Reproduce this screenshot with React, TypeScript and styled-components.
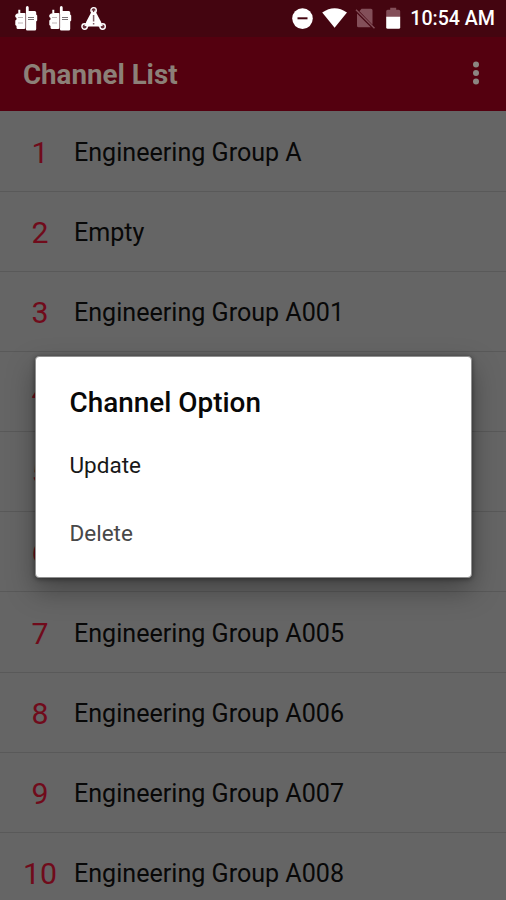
import React from "react";
import styled, { createGlobalStyle } from "styled-components";

const GlobalStyle = createGlobalStyle`
  * { box-sizing: border-box; }
  body { margin: 0; background: #656565; font-family: Roboto, sans-serif; }
`;

const Screen = styled.div`
  position: relative;
  width: 506px;
  height: 900px;
  overflow: hidden;
  background: #656565;
`;

const StatusBar = styled.header`
  display: flex;
  align-items: center;
  justify-content: space-between;
  height: 37px;
  padding: 0 11px 0 15px;
  background: #440510;
`;

const IconGroup = styled.div<{ $gap: number }>`
  display: flex;
  align-items: center;
  gap: ${(p) => p.$gap}px;
  height: 36px;
`;

const Clock = styled.span`
  color: #fff;
  font-size: 19.6px;
  font-weight: 500;
  line-height: 36px;
  white-space: nowrap;
`;

const AppBar = styled.div`
  display: flex;
  align-items: center;
  justify-content: space-between;
  height: 74px;
  padding: 0 24px 0 23px;
  background: #54000f;
`;

const AppTitle = styled.h1`
  margin: 0;
  color: #8c8078;
  font-size: 27.7px;
  font-weight: 700;
  line-height: 74px;
  padding-top: 1px;
`;

const ChannelList = styled.ol`
  margin: 0;
  padding: 0.6px 0 0;
  list-style: none;
`;

const ChannelRow = styled.li`
  display: flex;
  align-items: center;
  height: 80.15px;
  padding-top: 3px;
  border-bottom: 1px solid #595959;
`;

const ChannelNumber = styled.span`
  width: 80px;
  margin-right: -6px;
  color: #700b1b;
  font-size: 30.3px;
  line-height: 36px;
  text-align: center;
`;

const ChannelName = styled.span`
  color: #080808;
  font-size: 25.1px;
  line-height: 30px;
  white-space: nowrap;
`;

const Dialog = styled.section`
  position: absolute;
  top: 356px;
  left: 35px;
  width: 437px;
  height: 222px;
  padding: 27px 34px 0 33.5px;
  border-radius: 4px;
  background: #fff;
  border: 1px solid #909090;
  box-shadow: 0 12px 28px rgba(0, 0, 0, 0.34), 0 1px 5px rgba(0, 0, 0, 0.45);
`;

const DialogTitle = styled.h2`
  margin: 0 0 10px;
  color: #080808;
  font-size: 27.9px;
  font-weight: 500;
  line-height: 38px;
`;

const DialogOption = styled.div<{ $muted?: boolean }>`
  height: 67.5px;
  color: ${(p) => (p.$muted ? "#484848" : "#181818")};
  font-size: 22.5px;
  line-height: 67px;
`;

const RadioIcon = () => (
  <svg width="23" height="26" viewBox="0 0 23 26" fill="#fff">
    <path d="M3.300 3.700h2V7H9.500q1 0 1 1v13.500q0 1.500-1.500 1.500H3q-1.500 0-1.500-1.500V20L.3 19v-4.500l1.200-1V12L.3 11V9L2 7.500h1.300z" />
    <path d="M10.900 1.500Q10.900 0 12.300 0t1.400 1.500V5h6q1.500 0 1.500 1.500v2l1 1v5l-1 1V23q0 1.500-1.500 1.500h-7.300q-1.500 0-1.500-1.500z" />
    <path d="M10.700 8v14" stroke="#8e737a" strokeWidth=".7" />
    <path d="M13 11.500h6M13 13.500h6" stroke="#777174" strokeWidth="1" />
    <path d="M3 11.500h5M3 17h5" stroke="#b8adb0" strokeWidth=".9" />
  </svg>
);

const HazardIcon = () => (
  <svg width="26" height="26" viewBox="2 0 26 26" overflow="visible">
    <g transform="translate(-.4 .5)">
      <path d="M10.500 6h5l5 9.500 1 4.500h-17l1-4.500z" fill="#fff" />
      <g fill="#65303b" stroke="#fff" strokeWidth="1.400">
        <circle cx="13" cy="3.800" r="2.700" />
        <circle cx="4" cy="20" r="2.700" />
        <circle cx="22" cy="20" r="2.700" />
      </g>
      <path d="M11.200 4l1.800 4 1.800-4M4 18.500l4 1M22 18.500l-4 1" fill="none" stroke="#fff" strokeWidth="1.300" />
      <path d="M13 8.500V15M13 16.500v1.600" stroke="#806067" strokeWidth="1.500" />
    </g>
  </svg>
);

const DoNotDisturbIcon = () => (
  <svg width="22" height="22" viewBox="0 0 22 22">
    <circle cx="11.500" cy="10.600" r="10.300" fill="#fff" />
    <path d="M6.500 10.300h10" stroke="#440510" strokeWidth="2" />
  </svg>
);

const WifiIcon = () => (
  <svg width="26" height="22" viewBox="0 0 26 22">
    <path d="M.2 4.500Q12.600-4 25 4.500L12.600 19.800z" fill="#fff" />
  </svg>
);

const NoSimIcon = () => (
  <svg width="21" height="22" viewBox="2.500 .8 21 22" overflow="visible">
    <path d="M7 1.500h9.500q1.500 0 1.500 1.500v14.500L4.900 4.100zM2.500 6.200L16.300 20H4q-1.500 0-1.500-1.500z" fill="#834f59" />
    <path d="M1.500 2.500L20 21" stroke="#834f59" strokeWidth="1.500" />
  </svg>
);

const BatteryIcon = () => (
  <svg width="14" height="22" viewBox=".8 .8 14 22" overflow="visible">
    <path d="M0 4q0-1.500 1.500-1.500H4V.5h6v2h2.500Q14 2.500 14 4v6H0z" fill="#834f59" />
    <path d="M0 9.500h14V20q0 1.500-1.500 1.500h-11Q0 21.500 0 20z" fill="#fff" />
  </svg>
);

const OverflowIcon = () => (
  <svg width="12" height="26" viewBox="0 0 12 26" fill="#8c8682">
    <circle cx="6" cy="3.500" r="3" />
    <circle cx="6" cy="12" r="3" />
    <circle cx="6" cy="20.500" r="3" />
  </svg>
);

const channels = [
  "Engineering Group A",
  "Empty",
  "Engineering Group A001",
  "Engineering Group A002",
  "Engineering Group A003",
  "Engineering Group A004",
  "Engineering Group A005",
  "Engineering Group A006",
  "Engineering Group A007",
  "Engineering Group A008",
];

export default function App() {
  return (
    <Screen>
      <GlobalStyle />
      <StatusBar>
        <IconGroup $gap={11}>
          <RadioIcon />
          <RadioIcon />
          <HazardIcon />
        </IconGroup>
        <IconGroup $gap={9.2}>
          <DoNotDisturbIcon />
          <WifiIcon />
          <NoSimIcon />
          <BatteryIcon />
          <Clock>10:54 AM</Clock>
        </IconGroup>
      </StatusBar>
      <AppBar>
        <AppTitle>Channel List</AppTitle>
        <OverflowIcon />
      </AppBar>
      <ChannelList>
        {channels.map((name, i) => (
          <ChannelRow key={i}>
            <ChannelNumber>{i + 1}</ChannelNumber>
            <ChannelName>{name}</ChannelName>
          </ChannelRow>
        ))}
      </ChannelList>
      <Dialog role="dialog">
        <DialogTitle>Channel Option</DialogTitle>
        <DialogOption>Update</DialogOption>
        <DialogOption $muted>Delete</DialogOption>
      </Dialog>
    </Screen>
  );
}
